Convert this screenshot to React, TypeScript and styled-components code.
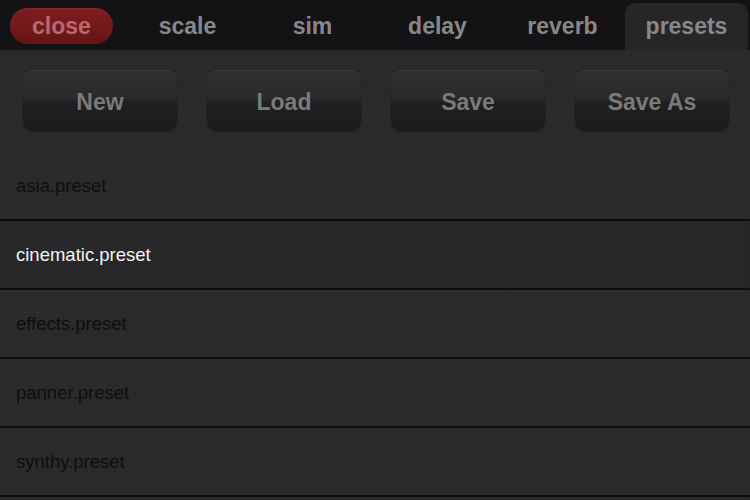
import * as React from "react";
import styled, { createGlobalStyle } from "styled-components";

const GlobalStyle = createGlobalStyle`
  html, body {
    margin: 0;
    padding: 0;
    background: #2a2a2c;
  }
  #root {
    width: 750px;
    height: 500px;
    overflow: hidden;
  }
`;

const Page = styled.div`
  width: 750px;
  height: 500px;
  display: flex;
  flex-direction: column;
  font-family: "Liberation Sans", Arial, sans-serif;
  background-color: #2a2a2c;
  background-image: repeating-linear-gradient(
      0deg,
      rgba(0, 0, 0, 0.06) 0px,
      rgba(0, 0, 0, 0.06) 1px,
      transparent 1px,
      transparent 2px
    ),
    repeating-linear-gradient(
      90deg,
      rgba(255, 255, 255, 0.015) 0px,
      rgba(255, 255, 255, 0.015) 1px,
      transparent 1px,
      transparent 2px
    );
`;

const TabBar = styled.div`
  height: 50px;
  flex: none;
  display: grid;
  grid-template-columns: repeat(6, 125px);
  background: #131315;
  box-sizing: border-box;
  padding-top: 3px;
`;

const Tab = styled.div<{ $active?: boolean }>`
  display: flex;
  align-items: center;
  justify-content: center;
  font-size: 23px;
  font-weight: bold;
  color: #88888a;
  margin: ${(p) => (p.$active ? "0 2px 0 0" : "0")};
  background: ${(p) => (p.$active ? "#262628" : "transparent")};
  border-radius: ${(p) => (p.$active ? "10px 10px 0 0" : "0")};
  padding-bottom: 1px;
`;

const ClosePill = styled.div`
  align-self: start;
  margin: 5px 12px 0 10px;
  height: 35px;
  border-radius: 18px;
  background: linear-gradient(#801d21, #661416);
  box-shadow: inset 0 1px 0 rgba(255, 255, 255, 0.06);
  display: flex;
  align-items: center;
  justify-content: center;
  font-size: 23px;
  font-weight: bold;
  color: #b86a70;
  padding-top: 1px;
`;

const Toolbar = styled.div`
  display: grid;
  grid-template-columns: repeat(4, 154px);
  column-gap: 30px;
  padding: 20px 0 0 23px;
  height: 102px;
  box-sizing: border-box;
`;

const Button = styled.div`
  height: 61px;
  box-sizing: border-box;
  padding-top: 3px;
  border-radius: 11px;
  background: linear-gradient(#303032 0%, #2a2a2c 45%, #1f1f21 55%, #1c1c1e 100%);
  box-shadow: 0 1px 2px rgba(0, 0, 0, 0.45), inset 0 1px 0 rgba(255, 255, 255, 0.05);
  display: flex;
  align-items: center;
  justify-content: center;
  font-size: 23px;
  font-weight: bold;
  color: #7a7a7a;
`;

const List = styled.div`
  display: flex;
  flex-direction: column;
`;

const Row = styled.div<{ $selected?: boolean }>`
  height: 69px;
  flex: none;
  display: flex;
  align-items: center;
  padding-left: 16px;
  box-sizing: border-box;
  border-bottom: 2px solid #0c0c0d;
  font-size: 18.5px;
  color: ${(p) => (p.$selected ? "#f2f2f2" : "#0e0e0f")};
  background: ${(p) => (p.$selected ? "rgba(0,0,0,0.06)" : "transparent")};
`;

const tabs = ["scale", "sim", "delay", "reverb"];
const actions = ["New", "Load", "Save", "Save As"];
const presets = [
  "asia.preset",
  "cinematic.preset",
  "effects.preset",
  "panner.preset",
  "synthy.preset",
];

export default function App() {
  return (
    <>
      <GlobalStyle />
      <Page>
        <TabBar>
          <ClosePill>close</ClosePill>
          {tabs.map((t) => (
            <Tab key={t}>{t}</Tab>
          ))}
          <Tab $active>presets</Tab>
        </TabBar>
        <Toolbar>
          {actions.map((a) => (
            <Button key={a}>{a}</Button>
          ))}
        </Toolbar>
        <List>
          {presets.map((p) => (
            <Row key={p} $selected={p === "cinematic.preset"}>
              {p}
            </Row>
          ))}
        </List>
      </Page>
    </>
  );
}
